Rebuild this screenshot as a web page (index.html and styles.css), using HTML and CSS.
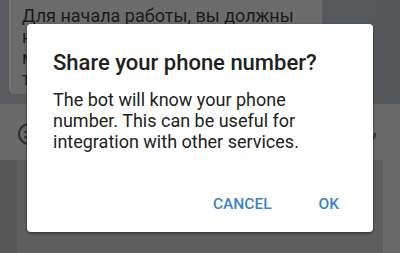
FILE: index.html
```html
<!DOCTYPE html>
<html>
<head>
<meta charset="utf-8">
<link rel="stylesheet" href="styles.css">
</head>
<body>
<div class="screen">
  <div class="chat">
    <div class="bubble">
      <p>Для начала работы, вы должны</p>
      <p>н</p>
      <p>м</p>
      <p>т</p>
    </div>
  </div>
  <div class="inputbar">
    <svg class="icon emoji" width="24" height="24" viewBox="0 0 24 24"><circle cx="12" cy="12" r="10" fill="none" stroke="#2e2e2e" stroke-width="2"/><circle cx="8.5" cy="10" r="1.3" fill="#2e2e2e"/><circle cx="15.5" cy="10" r="1.3" fill="#2e2e2e"/><path d="M7.5 14.5 Q12 18.5 16.5 14.5" fill="none" stroke="#2e2e2e" stroke-width="1.8"/></svg>
    <svg class="icon mic" width="24" height="24" viewBox="0 0 24 24"><rect x="9" y="3" width="6" height="11" rx="3" fill="#2e2e2e"/><path d="M5 11 Q5 18 12 18 Q19 18 19 11" fill="none" stroke="#2e2e2e" stroke-width="2"/><path d="M12 18 V21" stroke="#2e2e2e" stroke-width="2"/></svg>
  </div>
  <div class="keyboard">
    <div class="kb-left"></div>
    <div class="kb-panel"></div>
    <div class="kb-right"></div>
  </div>

  <div class="dialog">
    <h1 class="title">Share your phone number?</h1>
    <p class="message">The bot will know your phone number. This can be useful for integration with other services.</p>
    <div class="actions">
      <span class="btn">CANCEL</span>
      <span class="btn">OK</span>
    </div>
  </div>
</div>
</body>
</html>
```

FILE: styles.css
```css
* { box-sizing: border-box; }
html, body { margin: 0; padding: 0; }
body {
  width: 400px;
  height: 253px;
  overflow: hidden;
  font-family: Roboto, "Noto Sans", sans-serif;
  background: #5e5e5e;
}
.screen {
  position: relative;
  width: 400px;
  height: 253px;
  display: flex;
  flex-direction: column;
}
.chat {
  height: 104px;
  background: linear-gradient(90deg, #5a5c5f 0%, #56595c 100%);
  padding-left: 9px;
}
.bubble {
  width: 313px;
  height: 100px;
  margin-top: -6px;
  background: #6b6b6b;
  border-radius: 0 0 6px 6px;
  border-left: 2px solid #737373;
  padding: 11px 0 0 11px;
  color: #1b1b1b;
  font-size: 18px;
  line-height: 21px;
}
.bubble p { margin: 0; white-space: nowrap; }
.inputbar {
  height: 56px;
  background: #6a6a6a;
  display: flex;
  align-items: center;
  justify-content: space-between;
  padding: 4px 20px 0 17px;
}
.keyboard {
  flex: 1;
  display: flex;
}
.kb-left { width: 17px; background: #575757; }
.kb-panel { flex: 1; background: #5e5e5e; }
.kb-right { width: 17px; background: #686868; }

.dialog {
  position: absolute;
  left: 27px;
  top: 24px;
  width: 346px;
  height: 208px;
  background: #ffffff;
  border-radius: 4px;
  box-shadow: 0 1px 3px rgba(0,0,0,0.55);
  display: flex;
  flex-direction: column;
  padding: 25px 0 18px 26px;
}
.title {
  margin: 0;
  font-size: 22px;
  line-height: 28px;
  font-weight: 500;
  color: #212121;
}
.message {
  margin: 12px 0 0 0;
  padding-right: 20px;
  font-size: 18px;
  line-height: 21px;
  color: #222222;
}
.actions {
  margin-top: auto;
  display: flex;
  justify-content: flex-end;
  gap: 47px;
  padding-right: 34px;
}
.btn {
  font-size: 15.5px;
  line-height: 20px;
  font-weight: 500;
  color: #3a83c4;
}
```
